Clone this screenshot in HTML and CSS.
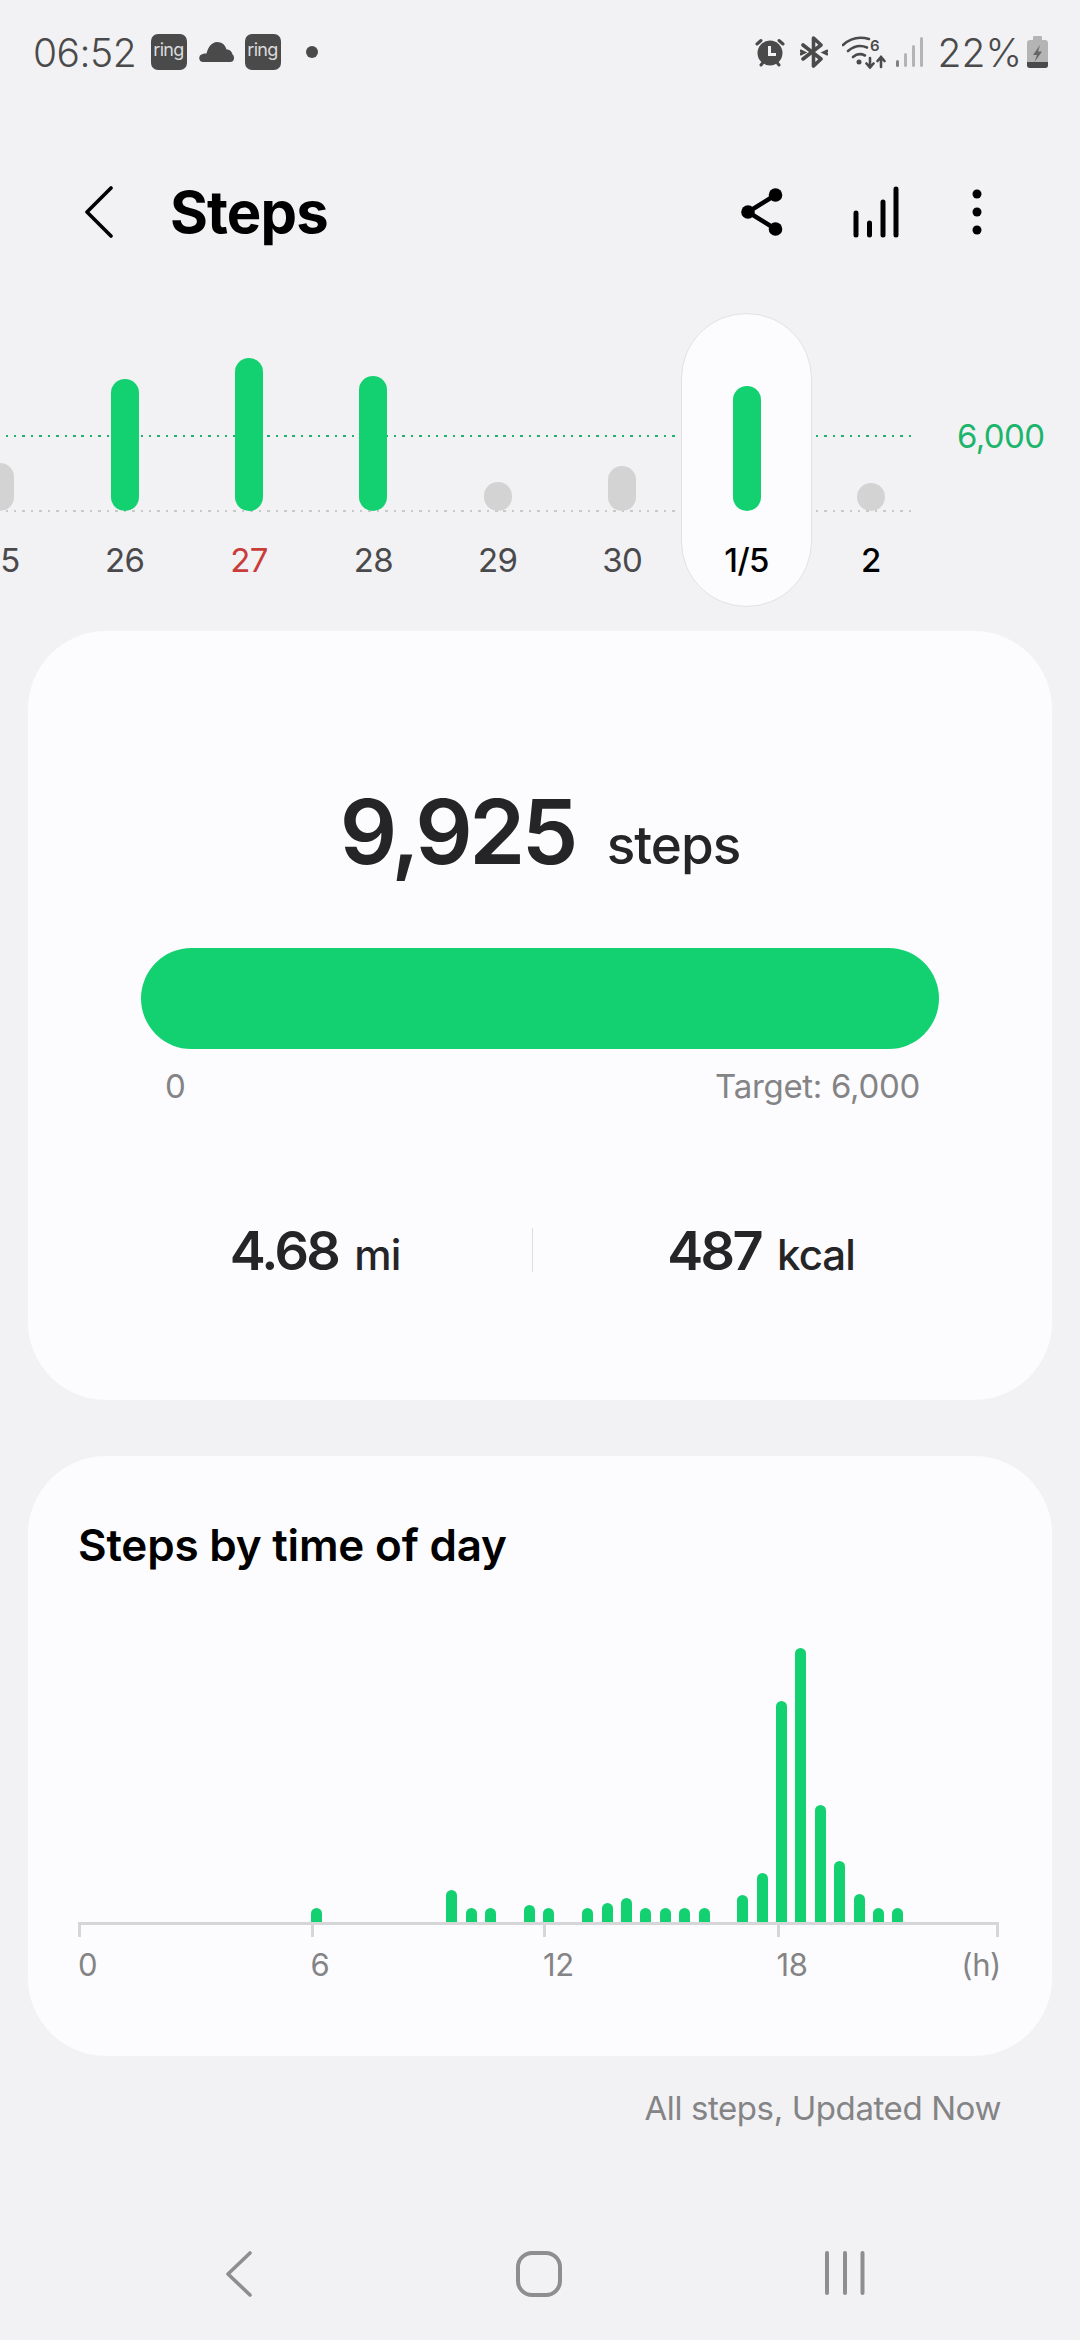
FILE: index.html
```html
<!DOCTYPE html>
<html lang="en">
<head>
<meta charset="utf-8">
<title>Steps</title>
<link rel="stylesheet" href="styles.css">
</head>
<body>
<div class="screen">
  <div class="status">
    <div class="status-left">
      <span class="clock">06:52</span>
      <span class="ring">ring</span>
      <svg class="ic-cloud" width="35" height="20" viewBox="0 0 35 20"><path fill="#4a4a4a" d="M4 20a4 4 0 0 1-1-7.8c1-.5 3-1 4.5-.7C9 5 13 0 18 0c5 0 8.500 3 9.500 7.500 3-.3 5.500 2 6 5 1 .5 1.500 2 1.500 3.500a4 4 0 0 1-4 4z"/></svg>
      <span class="ring">ring</span>
      <span class="notif-dot"></span>
    </div>
    <div class="status-right">
      <svg class="ic-alarm" width="30" height="30" viewBox="0 0 30 30"><path fill="none" stroke="#4a4a4a" stroke-width="3" stroke-linecap="round" d="M2 7 6 3.500M28 7l-4-3.500M6 28l2-2.500M24 28l-2-2.500"/><circle cx="15" cy="16" r="12.500" fill="#4a4a4a"/><path fill="none" stroke="#f2f2f4" stroke-width="3" d="M14.500 9v8.500H21"/></svg>
      <svg class="ic-bt" width="28" height="32" viewBox="0 0 28 32"><path fill="none" stroke="#4a4a4a" stroke-width="3.600" stroke-linecap="round" stroke-linejoin="round" d="M3 9 21 23l-7.500 7V2L21 9 3 23"/><path fill="none" stroke="#4a4a4a" stroke-width="3" stroke-linecap="round" d="M1 15l3 1.500-3 1.500M27 15l-3 1.500 3 1.500"/></svg>
      <svg class="ic-wifi" width="44" height="33" viewBox="0 0 44 33"><g fill="none" stroke="#4a4a4a" stroke-width="2.600" stroke-linecap="round"><path d="M1 9C9 1.500 18 .5 27 3"/><path d="M6 15c6-5 13-6 19-3.500"/><path d="M11 21c4-3.500 8-3.500 12-1.500"/><path d="M28 22v9M24.500 27.500 28 31.500l3.500-4M39 31v-10M35.500 25l3.500-4 3.500 4"/></g><circle cx="17" cy="26" r="2.500" fill="#4a4a4a"/><text class="wifi-six" x="28" y="15">6</text></svg>
      <svg class="ic-signal" width="28" height="30" viewBox="0 0 28 30"><g fill="#b4b4b4"><rect x="0" y="23" width="3" height="7" rx="1.500" fill="#808080"/><rect x="8" y="16" width="3" height="14" rx="1.500"/><rect x="16" y="8" width="3" height="22" rx="1.500"/><rect x="24" y="0" width="3" height="30" rx="1.500"/></g></svg>
      <span class="batt-text">22%</span>
      <svg class="ic-batt" width="21" height="32" viewBox="0 0 21 32"><path fill="#b4b4b4" d="M7 0h7a1 1 0 0 1 1 1v3h3a3 3 0 0 1 3 3v22a3 3 0 0 1-3 3H3a3 3 0 0 1-3-3V7a3 3 0 0 1 3-3h3V1a1 1 0 0 1 1-1z"/><path fill="#4a4a4a" d="M0 26h21v3a3 3 0 0 1-3 3H3a3 3 0 0 1-3-3z"/><path fill="#666" d="M13 9 6 19h4l-2.500 7L15 15.500h-4z"/></svg>
    </div>
  </div>

  <header class="appbar">
    <svg class="ic-back" width="28" height="52" viewBox="0 0 28 52"><path fill="none" stroke="#000" stroke-width="3.600" stroke-linecap="round" stroke-linejoin="round" d="M26 2 2 26l24 24"/></svg>
    <h1 class="title">Steps</h1>
    <div class="actions">
      <svg class="ic-share" width="42" height="48" viewBox="0 0 42 48"><path fill="none" stroke="#000" stroke-width="4.500" d="M34.500 7 7 24l27.500 17"/><circle cx="7" cy="24" r="6.800"/><circle cx="34.500" cy="7" r="6.800"/><circle cx="34.500" cy="41" r="6.800"/></svg>
      <svg class="ic-chart" width="46" height="52" viewBox="0 0 46 52"><g fill="none" stroke="#000" stroke-width="5" stroke-linecap="round"><path d="M3 27v22M16.500 37v12M30 16v33M43 3v46"/></g></svg>
      <svg class="ic-more" width="10" height="46" viewBox="0 0 10 46"><circle cx="5" cy="5" r="4.500"/><circle cx="5" cy="23" r="4.500"/><circle cx="5" cy="41" r="4.500"/></svg>
    </div>
  </header>

  <section class="week">
    <div class="rule rule-goal"></div>
    <div class="rule rule-base"></div>
    <span class="goal-label">6,000</span>
    <div class="day"><div class="plot"><i class="dbar off" style="height:48px"></i></div><span class="day-label">25</span></div>
    <div class="day"><div class="plot"><i class="dbar" style="height:132px"></i></div><span class="day-label">26</span></div>
    <div class="day"><div class="plot"><i class="dbar" style="height:153px"></i></div><span class="day-label sunday">27</span></div>
    <div class="day"><div class="plot"><i class="dbar" style="height:135px"></i></div><span class="day-label">28</span></div>
    <div class="day"><div class="plot"><i class="dbar off" style="height:29px"></i></div><span class="day-label">29</span></div>
    <div class="day"><div class="plot"><i class="dbar off" style="height:45px"></i></div><span class="day-label">30</span></div>
    <div class="day selected"><div class="plot"><i class="dbar" style="height:125px"></i></div><span class="day-label strong">1/5</span></div>
    <div class="day"><div class="plot"><i class="dbar off" style="height:28px"></i></div><span class="day-label strong">2</span></div>
  </section>

  <section class="card card-total">
    <div class="total"><span class="total-num">9,925</span><span class="total-unit">steps</span></div>
    <div class="progress"></div>
    <div class="progress-labels"><span>0</span><span>Target: 6,000</span></div>
    <div class="stats">
      <div class="stat stat-l"><span class="stat-num">4.68</span><span class="stat-unit">mi</span></div>
      <div class="stat-div"></div>
      <div class="stat stat-r"><span class="stat-num">487</span><span class="stat-unit">kcal</span></div>
    </div>
  </section>

  <section class="card card-day">
    <h2 class="card-title">Steps by time of day</h2>
    <div class="bars">
      <i></i><i></i><i></i><i></i><i></i><i></i><i></i><i></i><i></i><i></i><i></i><i></i>
      <i style="height:14px"></i><i></i><i></i><i></i><i></i><i></i><i></i>
      <i style="height:32px"></i><i style="height:14px"></i><i style="height:14px"></i><i></i>
      <i style="height:17px"></i><i style="height:14px"></i><i></i>
      <i style="height:14px"></i><i style="height:19px"></i><i style="height:24px"></i><i style="height:14px"></i><i style="height:14px"></i><i style="height:14px"></i><i style="height:14px"></i><i></i>
      <i style="height:27px"></i><i style="height:49px"></i><i style="height:221px"></i><i style="height:274px"></i><i style="height:117px"></i><i style="height:61px"></i><i style="height:28px"></i><i style="height:14px"></i><i style="height:14px"></i>
    </div>
    <div class="axis"><b></b><b></b><b></b><b></b><b></b></div>
    <div class="axis-labels"><span>0</span><span>6</span><span>12</span><span>18</span><span>(h)</span></div>
  </section>

  <p class="updated">All steps, Updated Now</p>

  <nav class="navbar">
    <svg width="26" height="46" viewBox="0 0 26 46"><path fill="none" stroke="#8e8e8e" stroke-width="3.600" stroke-linecap="round" stroke-linejoin="round" d="M24 2 2 23l22 21"/></svg>
    <svg width="46" height="46" viewBox="0 0 46 46"><rect x="2" y="2" width="42" height="42" rx="14" fill="none" stroke="#8e8e8e" stroke-width="4"/></svg>
    <svg width="40" height="44" viewBox="0 0 40 44"><g fill="none" stroke="#8e8e8e" stroke-width="4" stroke-linecap="round"><path d="M2 2v40M20 2v40M37.500 2v40"/></g></svg>
  </nav>
</div>
</body>
</html>
```
FILE: styles.css
```css
* { box-sizing: border-box; }
html, body { margin: 0; padding: 0; }
body { background: #f2f2f4; font-family: Inter, "Liberation Sans", sans-serif; color: #000; }
.screen { width: 1080px; height: 2340px; overflow: hidden; display: flex; flex-direction: column; }

.status { height: 104px; padding: 0 32px 0 33px; display: flex; justify-content: space-between; align-items: center; color: #4a4a4a; }
.status-left, .status-right { display: flex; align-items: center; }
.clock { font-size: 39px; font-weight: 300; letter-spacing: -0.5px; width: 117.500px; }
.ring { width: 36px; height: 36px; border-radius: 7px; background: #4a4a4a; color: #dcdcdc; font-size: 18px; line-height: 32px; text-align: center; letter-spacing: -0.7px; }
.ic-cloud { margin: 0 11px 0 12px; }
.notif-dot { width: 12px; height: 12px; border-radius: 50%; background: #4a4a4a; margin-left: 25px; }
.ic-alarm { margin-right: 15px; }
.ic-bt { margin-right: 14px; }
.ic-wifi { margin-right: 10px; }
.ic-signal { margin-right: 14px; }
.wifi-six { font-size: 15px; font-weight: 600; fill: #4a4a4a; font-family: Inter, sans-serif; }
.batt-text { font-size: 39px; font-weight: 300; margin-right: 5px; }

.appbar { margin-top: 56px; height: 104px; padding: 0 98px 0 85px; display: flex; align-items: center; }
.title { margin: 0 0 0 57px; font-size: 58px; font-weight: 700; letter-spacing: -0.9px; flex: 1; }
.actions { display: flex; align-items: center; }
.ic-share { margin-right: 70px; }
.ic-chart { margin-right: 73px; }

.week { position: relative; margin: 49px 0 0 -62px; height: 294px; display: flex; }
.rule { position: absolute; left: 0; width: 976px; height: 2px; }
.rule-goal { top: 122px; background: repeating-linear-gradient(90deg, #22b070 0 2.500px, transparent 2.500px 8.440px); }
.rule-base { top: 197px; background: repeating-linear-gradient(90deg, #c9c9c9 0 2.500px, transparent 2.500px 8.440px); }
.goal-label { position: absolute; left: 1019px; top: 103px; font-size: 33px; line-height: 40px; color: #1db56c; letter-spacing: -0.6px; }
.day { position: relative; width: 124.400px; display: flex; flex-direction: column; align-items: center; }
.selected::before { content: ""; position: absolute; left: -3px; right: -3px; top: 0; bottom: 0; border-radius: 66px; background: #fcfcfe; border: 1px solid #e2e2e4; box-shadow: 0 0 0 4px #f2f2f4; }
.plot { position: relative; height: 198px; display: flex; align-items: flex-end; }
.dbar { display: block; width: 28px; border-radius: 14px; background: #13d071; }
.dbar.off { background: #d3d3d3; }
.day-label { position: relative; margin-top: 29px; font-size: 33px; line-height: 40px; color: #4a4a4c; letter-spacing: -0.6px; }
.sunday { color: #c83c3a; }
.strong { color: #000; font-weight: 500; }

.card { background: #fcfcfe; border-radius: 78px; margin: 0 28px; }
.card-total { margin-top: 24px; height: 769px; padding: 147px 113px 0; }
.total { display: flex; justify-content: center; align-items: baseline; color: #252528; height: 108px; line-height: 108px; }
.total-num { font-size: 90px; font-weight: 600; letter-spacing: -3.600px; }
.total-unit { font-size: 53px; font-weight: 500; margin-left: 32px; letter-spacing: -1px; }
.progress { margin-top: 62px; height: 101px; border-radius: 51px; background: #13d071; }
.progress-labels { display: flex; justify-content: space-between; padding: 17px 19px 0 24px; font-size: 33px; line-height: 40px; color: #848486; letter-spacing: -0.3px; }
.stats { margin: 114px 0 0 -43px; display: flex; align-items: center; color: #252528; height: 60px; }
.stat { flex: none; display: flex; align-items: baseline; justify-content: center; }
.stat-l { width: 434px; }
.stat-r { width: 456px; }
.stat-div { flex: none; width: 1px; height: 44px; background: #dedee0; }
.stat-num { font-size: 54px; font-weight: 600; letter-spacing: -2.600px; }
.stat-unit { font-size: 42px; font-weight: 500; margin-left: 16px; letter-spacing: -1px; }

.card-day { margin-top: 56px; height: 600px; padding: 60px 52px 0 50px; }
.card-title { margin: 0; font-size: 44px; line-height: 58px; font-weight: 600; letter-spacing: -0.2px; }
.bars { margin-top: 54px; height: 294px; display: flex; align-items: flex-end; gap: 8.400px; }
.bars i { display: block; flex: none; width: 11px; height: 0; border-radius: 6px 6px 0 0; background: #13d071; }
.axis { height: 15px; width: 921px; border-top: 3px solid #d6d6d8; display: grid; grid-template-columns: 232.500px 232.500px 233.500px 1fr auto; }
.axis b { display: block; width: 3px; height: 12px; background: #d6d6d8; }
.axis-labels { display: grid; grid-template-columns: 232.500px 232.500px 233.500px 1fr auto; width: 923px; padding-top: 8px; font-size: 31px; line-height: 40px; color: #848486; letter-spacing: -0.4px; }

.updated { margin: 32px 79px 0 0; text-align: right; font-size: 33px; line-height: 40px; color: #848486; letter-spacing: -0.4px; }

.navbar { margin-top: auto; height: 138px; display: flex; padding: 49px 215px 0 226px; justify-content: space-between; align-items: flex-start; }
```
